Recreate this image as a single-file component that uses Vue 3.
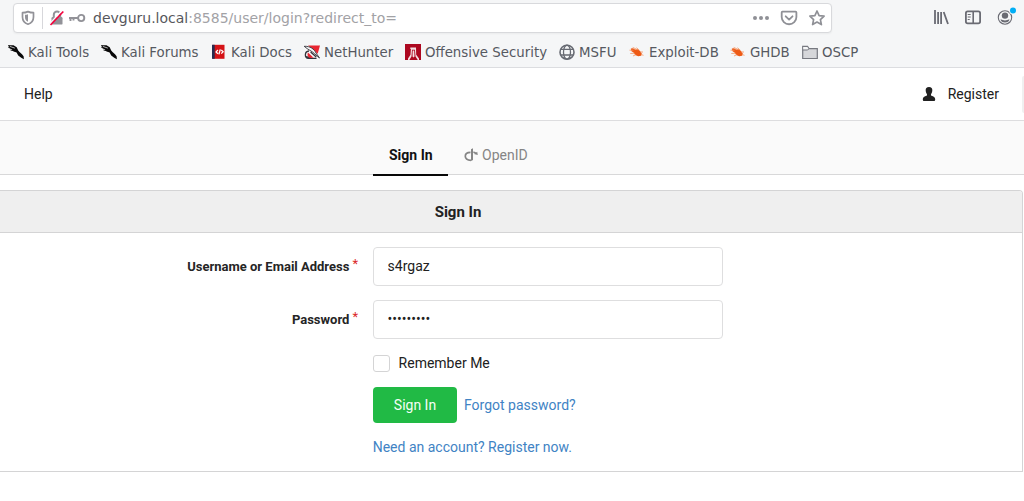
<script setup>
import { ref } from 'vue'

const bookmarks = [
  { label: 'Kali Tools', icon: 'kali', width: 93 },
  { label: 'Kali Forums', icon: 'kali', width: 110 },
  { label: 'Kali Docs', icon: 'docs', width: 93 },
  { label: 'NetHunter', icon: 'hunter', width: 101 },
  { label: 'Offensive Security', icon: 'offsec', width: 154 },
  { label: 'MSFU', icon: 'globe', width: 70 },
  { label: 'Exploit-DB', icon: 'bug', width: 101 },
  { label: 'GHDB', icon: 'bug', width: 72 },
  { label: 'OSCP', icon: 'folder', width: 70 },
]
const username = ref('s4rgaz')
const password = ref('•••••••••')
</script>

<template>
  <div class="window">
    <div class="toolbar">
      <div class="urlbar">
        <svg class="shield" width="14" height="16" viewBox="0 0 14 16">
          <path d="M7 1.600C5.400 2.300 3.300 2.700 1.500 2.700V7c0 3.800 2.200 6.200 5.500 7.200 3.300-1 5.500-3.400 5.500-7.200V2.700C10.700 2.700 8.600 2.300 7 1.600z" fill="none" stroke="#929298" stroke-width="1.700" stroke-linejoin="round" />
          <path d="M7 4.200v7.600C5 10.900 4 9.400 4 7V4.800C5 4.700 6.100 4.500 7 4.200z" fill="#929298" />
        </svg>
        <i class="divider"></i>
        <svg class="lock" width="16" height="16" viewBox="0 0 16 16">
          <path d="M4.800 7.500V4.700a3.200 3.200 0 0 1 6.400 0v2.800" fill="none" stroke="#929298" stroke-width="2" />
          <rect x="2.500" y="7" width="11" height="7.600" rx="1.200" fill="#929298" />
          <path d="M.5 14 12.800.7" stroke="#f9f9fa" stroke-width="1.500" />
          <path d="M1.500 15 14.300 1.500" stroke="#f5003d" stroke-width="1.700" />
        </svg>
        <svg class="key" width="17" height="12" viewBox="0 0 17 12">
          <circle cx="12.200" cy="6" r="3.100" fill="none" stroke="#929298" stroke-width="1.900" />
          <path d="M9 6H0M1.500 6v3M4.500 6v2.400" fill="none" stroke="#929298" stroke-width="1.900" />
        </svg>
        <span class="url"><b>devguru.local</b>:8585/user/login?redirect_to=</span>
        <svg class="page-actions" width="76" height="18" viewBox="0 0 76 18">
          <g fill="#8f9096"><circle cx="3" cy="9" r="2" /><circle cx="9" cy="9" r="2" /><circle cx="15" cy="9" r="2" /></g>
          <g fill="none" stroke="#8f9096" stroke-width="1.800" stroke-linecap="round" stroke-linejoin="round">
            <path d="M30.400 2.700h13.200q.8 0 .8.800v4.400a7.300 7.300 0 0 1-14.700 0V3.500q0-.8.700-.8z" />
            <path d="m33.700 7.300 3.400 3.300 3.400-3.300" />
            <path d="m65 2 2.100 4.600 5 .6-3.700 3.400 1 5L65 13.100l-4.400 2.500 1-5-3.700-3.400 5-.6z" stroke-width="1.700" />
          </g>
        </svg>
      </div>
      <svg class="browser-actions" width="86" height="22" viewBox="0 0 86 22">
        <g fill="none" stroke="#6a6b73" stroke-width="1.800">
          <path d="M3 4v14M6.100 6v12M9.100 6v12M11.700 6l4.300 12" />
          <rect x="33.900" y="5.400" width="14.200" height="12" rx="1.800" />
          <path d="M41.200 5.400v12" stroke-width="1.600" />
          <path d="M35.700 8.500h3M35.700 11h3M35.700 13.500h2" stroke-width="1.100" />
          <circle cx="73" cy="11.500" r="6.700" stroke-width="1.100" />
        </g>
        <circle cx="73" cy="9.600" r="3.200" fill="#6a6b73" />
        <path d="M68.500 13.300q4.500 2.300 9 0-.7 3.300-4.500 3.300t-4.500-3.300z" fill="#6a6b73" />
        <circle cx="81" cy="4.500" r="3.900" fill="#f5f6f7" />
        <circle cx="81" cy="4.500" r="3" fill="#00aef5" />
      </svg>
    </div>

    <div class="bookmarks">
      <div v-for="b in bookmarks" :key="b.label" class="bookmark" :style="{ width: b.width + 'px' }">
        <svg width="16" height="16" viewBox="0 0 16 16">
          <g v-if="b.icon === 'kali'">
            <path d="M1 1.200 5.500 1.300l3.200 2 1.500 3.100 1.300 1.700 2.500 2.100 1.600 2 .3 3.100-2.700-1.500-3-2.400-1.600-2.800-2.800-1-1.800-2L.8 3.200z" fill="#080808" />
            <path d="M0 1.500 6 4M.4 3.400l5 1.800M2.500 6l4 1" stroke="#080808" stroke-width=".9" />
            <path d="m1.800 2.400 5 1.700" stroke="#e4e5e7" stroke-width=".8" />
          </g>
          <g v-else-if="b.icon === 'docs'">
            <path d="M1.500.8h12v14h-12z" fill="#d51317" /><path d="M1 .8h2.700v14H1z" fill="#272c50" />
            <path d="M6.900 6 5.100 7.900l1.800 1.800M10.300 6l1.800 1.800-1.800 1.800M9.300 5.400 7.900 10.400" fill="none" stroke="#fff" stroke-width="1.300" />
          </g>
          <g v-else-if="b.icon === 'hunter'">
            <path d="M4 1.500h12l-2.300 8.300z" fill="#e92632" />
            <path d="M.2 2.300C6 2 10.300 5 12 9l3.500 5-5.200-4.500C8 7 4.300 6 .2 2.300z" fill="#f6f6f7" stroke="#34343b" stroke-width=".9" />
            <path d="M5 7C.3 7.500.2 14 4.500 14.300h8M2.300 12.500 7.500 14M6.600 8l5.700 5" fill="none" stroke="#34343b" stroke-width="1.300" />
            <path d="m4 8.500 5.500 5.200H5.200Q2.500 11.500 4 8.500z" fill="#e92632" />
          </g>
          <g v-else-if="b.icon === 'offsec'">
            <path d="M0 0h16v16H0z" fill="#ad0820" />
            <path d="M5.300 3.500h5.700l.2 7.200 2.800 3.700V16h-1.200l-2.300-3.500-.6-6.700H7l-.5 6.700L4.300 16H3v-1.600l2.500-3.700.4-5.700h-.6z" fill="#f4dfe2" />
            <path d="M7.700 6.500h1.500l.3 6-.9 1-1.100-1z" fill="#f4dfe2" />
          </g>
          <g v-else-if="b.icon === 'globe'" fill="none" stroke="#686b73" stroke-width="1.300">
            <circle cx="8" cy="8.200" r="7" stroke-width="1.600" /><ellipse cx="8" cy="8.200" rx="3.500" ry="7" />
            <path d="M1.800 5.400h12.400M1.800 11h12.400" />
          </g>
          <g v-else-if="b.icon === 'bug'">
            <path d="M1.800 4.400 4 4.200l2 1.300 2.700-.2L11 7l1.800 2.500-.6 2.200-3 .6-3-1.300L4.500 8.500 2.500 7.200z" fill="#ee5a15" />
            <path d="M.5 6.200h4M1.300 9.500 5.500 9.200M4 12l3-1.400M3.700 3.400l4.800 2.300M7.500 3.700l3 2.700M11 8h3M12 10.500l2.500.8" stroke="#f4935f" stroke-width=".8" />
          </g>
          <g v-else>
            <path d="M.7 2.300h4.800l1.500 2.300H15.300v9.900H.7z" fill="#d6d7da" stroke="#777980" stroke-width="1.200" />
            <path d="M1.300 2.900h3.900l1.200 1.800-1 1H1.300z" fill="#f5f6f7" /><path d="M.7 6h5l1.200-1.200" fill="none" stroke="#777980" />
          </g>
        </svg>
        <span>{{ b.label }}</span>
      </div>
    </div>

    <div class="navbar">
      <a class="help">Help</a>
      <a class="register">
        <svg width="14" height="16" viewBox="0 0 14 16"><path d="M7 1c2.400 0 3.500 1.400 3.300 3.500C10.200 6.300 9.600 7.500 9 8.300v1.100c2.800.8 4.200 1.700 4.200 3.800 0 1.200-.4 1.800-1 1.800H1.800c-.6 0-1-.6-1-1.800 0-2.100 1.400-3 4.200-3.800V8.300C4.400 7.500 3.800 6.300 3.700 4.500 3.500 2.400 4.600 1 7 1z" fill="#212121" /></svg>
        <span>Register</span>
      </a>
      <i class="edge"></i>
    </div>

    <div class="tabs">
      <a class="tab active">Sign In</a>
      <a class="tab">
        <svg width="15" height="14" viewBox="0 0 15 14"><path d="M6.500 4.400C3.300 4.400 1.300 6 1.300 8.200s2.200 3.900 5.700 4.100" fill="none" stroke="#858585" stroke-width="1.700" /><path d="M7 1.200 9 .2v11.900l-2 1z" fill="#858585" /><path d="M9.300 3.600c1.200.1 2.100.4 2.800.9l1.100-.7.600 3.100-3.800-.8 1-.6c-.5-.3-1-.4-1.700-.5z" fill="#858585" /></svg>
        <span>OpenID</span>
      </a>
    </div>

    <main class="panel">
      <h4>Sign In</h4>
      <form @submit.prevent>
        <div class="row">
          <label>Username or Email Address<sup>*</sup></label>
          <input v-model="username" />
        </div>
        <div class="row">
          <label>Password<sup>*</sup></label>
          <input v-model="password" class="secret" />
        </div>
        <div class="remember"><i class="checkbox"></i><span>Remember Me</span></div>
        <div class="actions"><button>Sign In</button><a>Forgot password?</a></div>
        <a class="signup">Need an account? Register now.</a>
      </form>
    </main>
  </div>
</template>

<style>
body { background: #fff; overflow: hidden; }
</style>

<style scoped>
* { box-sizing: border-box; }
.window { width: 1024px; height: 501px; overflow: hidden; font-family: Roboto, sans-serif; font-size: 14px; color: #212121; background: #fff; }
svg { display: block; flex: none; }
.toolbar { height: 36px; padding: 3px 6px 0 13px; display: flex; background: #f5f6f7; }
.urlbar { width: 819px; height: 30px; border: 1px solid #d8d9dc; border-radius: 4px; background: #fff; display: flex; align-items: center; padding-left: 7px; box-shadow: 0 1px 2px #0000000c; }
.divider { width: 1px; height: 22px; background: #d7d7db; margin: 0 6px 0 7px; }
.key { margin-left: 4px; }
.url { margin-left: 7px; font: 14px/20px "DejaVu Sans", sans-serif; color: #a2a2a6; white-space: pre; width: 659px; }
.url b { font-weight: 400; color: #57575c; }
.browser-actions { margin: 3px 0 0 100px; }
.bookmarks { height: 32px; padding: 0 0 0 8px; display: flex; align-items: center; background: #f5f6f7; border-bottom: 1px solid #dcdde0; font: 13.333px/20px "DejaVu Sans", sans-serif; color: #565961; }
.bookmark { display: flex; flex: none; align-items: center; gap: 4px; white-space: nowrap; }
.bookmark span { padding-top: 2px; }
.navbar { height: 53px; padding: 0 0 0 24px; display: flex; align-items: center; border-bottom: 1px solid #dddddf; }
.register { margin-left: auto; display: flex; align-items: center; gap: 12px; }
.edge { width: 2px; height: 37px; margin-left: 23px; background: #f0f0f0; border-radius: 3px 0 0 3px; }
.tabs { height: 54px; padding-left: 373px; display: flex; align-items: flex-end; background: #fafafa; border-bottom: 1px solid #d8d8d9; }
.tab { height: 39px; padding: 0 16px; display: flex; align-items: center; gap: 3px; color: #858585; white-space: nowrap; }
.tab.active { width: 75px; height: 41px; margin-bottom: -2px; border-bottom: 2px solid #080808; color: #111; font-weight: 700; position: relative; }
.panel { margin-top: 15px; width: 1023px; height: 282px; border: 1px solid #d4d4d5; border-left: 0; border-top-right-radius: 4px; overflow: hidden; }
h4 { margin: 0; height: 42px; padding-right: 106px; text-align: center; font: 700 15px/42px Roboto, sans-serif; background: #efefef; border-bottom: 1px solid #d4d4d5; }
form { padding-top: 14px; }
.row { display: flex; height: 39px; margin-bottom: 14px; }
label { width: 358px; margin-right: 15px; text-align: right; font-size: 13px; line-height: 39px; font-weight: 700; color: #252525; white-space: nowrap; }
sup { margin-left: 3px; color: #db2828; font-size: 13px; line-height: 0; vertical-align: 3px; font-weight: 400; }
input { width: 350px; height: 39px; padding: 0 14px 2px 13.600px; border: 1px solid #dededf; border-radius: 4px; outline: 0; font: 14px Roboto, sans-serif; color: #212121; background: #fff; }
.remember { height: 20px; display: flex; align-items: center; gap: 8.600px; margin-left: 373px; }
.checkbox { width: 17px; height: 17px; border: 1px solid #d4d4d5; border-radius: 3px; }
.actions { display: flex; align-items: center; gap: 7px; margin: 14px 0 0 373px; height: 36px; }
button { width: 84px; height: 36px; padding: 0; border: 0; border-radius: 4px; color: #f5fff7; background: #21ba45; font: 14px Roboto, sans-serif; }
.actions a, .signup { color: #4183c4; }
.signup { display: block; margin: 14px 0 0 372.700px; line-height: 20px; }
</style>
